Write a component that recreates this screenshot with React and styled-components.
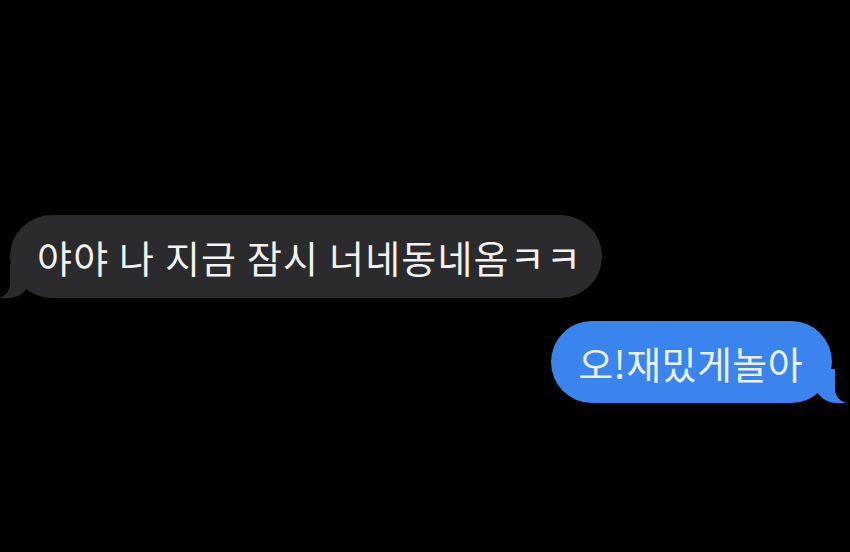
import React from "react";
import styled, { createGlobalStyle } from "styled-components";

const GlobalStyle = createGlobalStyle`
  html, body {
    margin: 0;
    padding: 0;
    background: #000;
  }
  body {
    font-family: "Noto Sans CJK KR", "Noto Sans", sans-serif;
  }
`;

const Screen = styled.div`
  width: 850px;
  height: 552px;
  background: #000;
  display: flex;
  flex-direction: column;
  padding: 215px 18px 0 10px;
  box-sizing: border-box;
  gap: 23px;
`;

const Bubble = styled.div`
  position: relative;
  align-self: ${(p) => (p.mine ? "flex-end" : "flex-start")};
  background: ${(p) => (p.mine ? "#3b84ee" : "#2b2b2d")};
  color: ${(p) => (p.mine ? "#e8f1ff" : "#f2f2f2")};
  height: ${(p) => (p.mine ? "82px" : "83px")};
  border-radius: 42px;
  padding: 0 ${(p) => (p.mine ? "29px" : "20px")} 0 27px;
  display: flex;
  align-items: center;
  font-size: 38px;
  letter-spacing: ${(p) => (p.mine ? "0.4px" : "1.2px")};
  white-space: nowrap;
  box-sizing: border-box;

  &::before {
    content: "";
    position: absolute;
    bottom: 0;
    ${(p) => (p.mine ? "right: -13px;" : "left: -10px;")}
    width: 30px;
    height: 34px;
    background: ${(p) => (p.mine ? "#3b84ee" : "#2b2b2d")};
    ${(p) =>
      p.mine
        ? "border-bottom-left-radius: 22px 20px;"
        : "border-bottom-right-radius: 22px 20px;"}
  }

  &::after {
    content: "";
    position: absolute;
    bottom: 0;
    ${(p) => (p.mine ? "right: -33px;" : "left: -30px;")}
    width: 30px;
    height: 36px;
    background: #000;
    ${(p) =>
      p.mine
        ? "border-bottom-left-radius: 14px;"
        : "border-bottom-right-radius: 14px;"}
  }
`;

const App = () => {
  return (
    <>
      <GlobalStyle />
      <Screen>
        <Bubble>야야 나 지금 잠시 너네동네옴ㅋㅋ</Bubble>
        <Bubble mine>오!재밌게놀아</Bubble>
      </Screen>
    </>
  );
};

export default App;
